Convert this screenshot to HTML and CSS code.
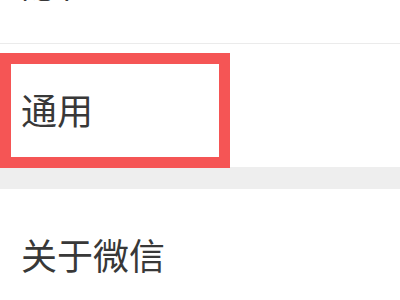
FILE: index.html
```html
<!DOCTYPE html>
<html lang="zh">
<head>
<meta charset="utf-8">
<link rel="stylesheet" href="styles.css">
</head>
<body>
<div class="page">
  <div class="group">
    <div class="cell cell-top"><span class="label">隐私</span></div>
    <div class="cell"><span class="label">通用</span></div>
  </div>
  <div class="gap"></div>
  <div class="group">
    <div class="cell"><span class="label">关于微信</span></div>
  </div>
  <div class="highlight"></div>
</div>
</body>
</html>
```
FILE: styles.css
```css
html, body {
  margin: 0;
  padding: 0;
  background: #ffffff;
}
body {
  width: 400px;
  height: 300px;
  overflow: hidden;
  font-family: "Noto Sans CJK SC", "Noto Sans", sans-serif;
}
.page {
  position: relative;
  margin-top: -79px;
}
.group {
  background: #ffffff;
}
.cell {
  display: flex;
  align-items: center;
  height: 123px;
  box-sizing: border-box;
  padding: 6px 22px 0 21px;
  border-bottom: 1px solid #ebebeb;
}
.cell-top {
  padding-top: 0;
}
.group .cell:last-child {
  border-bottom: none;
}
.label {
  font-size: 36px;
  line-height: 36px;
  color: #383838;
}
.gap {
  height: 22px;
  background: #eeeeee;
}
.highlight {
  position: absolute;
  left: 0;
  top: 132px;
  width: 230px;
  height: 115px;
  box-sizing: border-box;
  border: 11px solid #f55555;
}
```
